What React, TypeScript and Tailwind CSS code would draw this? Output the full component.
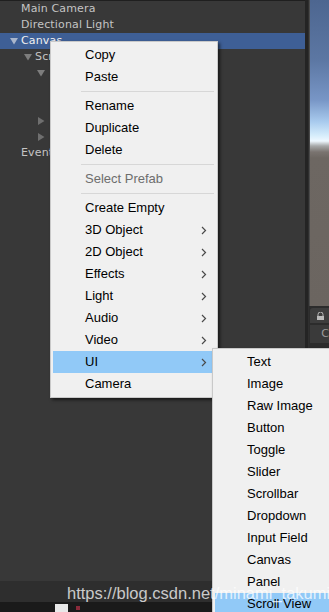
import React from "react";

type Row = {
  label: string;
  pad: string;
  tri?: "down" | "right";
  triBox?: string;
  selected?: boolean;
};

const rows: Row[] = [
  { label: "Main Camera", pad: "pl-[21px]" },
  { label: "Directional Light", pad: "pl-[21px]" },
  { label: "Canvas", pad: "pl-[10px]", tri: "down", triBox: "w-[11px]", selected: true },
  { label: "Scroll View", pad: "pl-[24px]", tri: "down", triBox: "w-[11px]" },
  { label: "", pad: "pl-[37px]", tri: "down", triBox: "w-[12px]" },
  { label: "", pad: "pl-[63px]" },
  { label: "", pad: "pl-[77px]" },
  { label: "", pad: "pl-[38px]", tri: "right", triBox: "w-[11px]" },
  { label: "", pad: "pl-[38px]", tri: "right", triBox: "w-[11px]" },
  { label: "EventSystem", pad: "pl-[21px]" },
];

function Tri({ dir, light }: { dir: "down" | "right"; light?: boolean }) {
  if (dir === "down")
    return (
      <svg width="8" height="7" viewBox="0 0 8 7">
        <polygon points="0,0 8,0 4,6.5" fill={light ? "#a9b6cc" : "#7d7d7d"} />
      </svg>
    );
  return (
    <svg width="7" height="8" viewBox="0 0 7 8">
      <polygon points="0,0 6.5,4 0,8" fill="#6f6f6f" />
    </svg>
  );
}

function Chevron() {
  return (
    <svg width="6" height="9" viewBox="0 0 6 9" className="mr-[8px]">
      <path d="M1 1 L4.5 4.5 L1 8" fill="none" stroke="#4a4a4a" strokeWidth="1.2" />
    </svg>
  );
}

function Item({
  label,
  arrow,
  active,
  disabled,
}: {
  label: string;
  arrow?: boolean;
  active?: boolean;
  disabled?: boolean;
}) {
  return (
    <div
      className={
        "h-[22px] flex items-center justify-between pl-[32px] " +
        (active ? "bg-[#91c9f7]" : "")
      }
    >
      <span className={disabled ? "text-[#6d6d6d]" : "text-black"}>{label}</span>
      {arrow ? <Chevron /> : null}
    </div>
  );
}

function Sep() {
  return (
    <div className="h-[7px] pt-[3px] pl-[28px] pr-[1px]">
      <div className="h-px bg-[#d7d7d7]" />
    </div>
  );
}

export default function App() {
  return (
    <div className="relative w-[329px] h-[612px] overflow-hidden bg-[#383838] flex flex-col">
      {/* main area */}
      <div className="flex h-[581px]">
        {/* hierarchy */}
        <div
          className="w-[309px] flex flex-col border-t border-[#1f1f1f] text-[11px] tracking-[0.15px] text-[#c4c4c4]"
          style={{ fontFamily: '"DejaVu Sans", sans-serif' }}
        >
          {rows.map((r, i) => (
            <div
              key={i}
              className={
                "h-[16px] flex items-center whitespace-nowrap " +
                r.pad +
                (r.selected ? " bg-[#3e5f96] text-[#f0f0f0]" : "")
              }
            >
              {r.tri ? (
                <span className={"flex items-center shrink-0 " + (r.triBox ?? "")}>
                  <Tri dir={r.tri} light={r.selected} />
                </span>
              ) : null}
              {r.label ? <span>{r.label}</span> : null}
            </div>
          ))}
        </div>
        {/* divider */}
        <div className="w-[4px] bg-[#242424] border-r border-[#2f2f2f]" />
        {/* scene view strip */}
        <div className="flex-1 flex flex-col">
          <div className="h-[306px] border-l border-[#4a4a4a] bg-[linear-gradient(to_bottom,#4d6690_0px,#5c77a3_60px,#7896c6_100px,#a9cbee_122px,#d4ecfb_135px,#eef8ff_141px,#a6a8a8_146px,#7a7470_152px,#6d6762_158px,#6b6560_100%)]" />
          <div className="flex-1 bg-[#2c2c2c] flex flex-col gap-[2px] pt-[2px] pl-[1px]">
            <div className="h-[15px] rounded-tl-[3px] bg-[#3d3d3d] flex items-center pl-[6px]">
              <svg width="9" height="8" viewBox="0 0 9 8">
                <path d="M2 4 V2.5 A2.5 2.5 0 0 1 7 2.5 V4" fill="none" stroke="#bbb" strokeWidth="1" />
                <rect x="1" y="4" width="7" height="4" fill="#bbb" />
              </svg>
            </div>
            <div
              className="h-[18px] bg-[#3a3a3a] flex items-center pl-[11px] text-[11px] text-[#9a9a9a]"
              style={{ fontFamily: '"DejaVu Sans", sans-serif' }}
            >
              C
            </div>
          </div>
        </div>
      </div>
      {/* bottom band */}
      <div className="h-[21px] bg-[#2e2e2e]" />
      <div className="flex-1 bg-[#1a1a1a] flex items-end pl-[55px] gap-[8px]">
        <div className="w-[13px] h-[8px] bg-[#e8e8e8]" />
        <div className="w-[4px] h-[4px] bg-[#8a2a3a] mb-[2px]" />
      </div>

      {/* context menu */}
      <div
        className="absolute left-[50px] top-[41px] w-[168px] bg-[#f0f0f0] border border-[#c9c9c9] p-[2px] shadow-[2px_2px_3px_rgba(0,0,0,0.55)] text-[13px]"
        style={{ fontFamily: '"Liberation Sans", Arial, sans-serif' }}
      >
        <Item label="Copy" />
        <Item label="Paste" />
        <Sep />
        <Item label="Rename" />
        <Item label="Duplicate" />
        <Item label="Delete" />
        <Sep />
        <Item label="Select Prefab" disabled />
        <Sep />
        <Item label="Create Empty" />
        <Item label="3D Object" arrow />
        <Item label="2D Object" arrow />
        <Item label="Effects" arrow />
        <Item label="Light" arrow />
        <Item label="Audio" arrow />
        <Item label="Video" arrow />
        <Item label="UI" arrow active />
        <Item label="Camera" />
      </div>

      {/* submenu */}
      <div
        className="absolute left-[212px] top-[348px] w-[140px] bg-[#f0f0f0] border border-[#c9c9c9] p-[2px] shadow-[2px_2px_3px_rgba(0,0,0,0.55)] text-[13px]"
        style={{ fontFamily: '"Liberation Sans", Arial, sans-serif' }}
      >
        <Item label="Text" />
        <Item label="Image" />
        <Item label="Raw Image" />
        <Item label="Button" />
        <Item label="Toggle" />
        <Item label="Slider" />
        <Item label="Scrollbar" />
        <Item label="Dropdown" />
        <Item label="Input Field" />
        <Item label="Canvas" />
        <Item label="Panel" />
        <Item label="Scroll View" active />
      </div>

      {/* watermark */}
      <div
        className="absolute left-[67px] top-[583px] text-[16.5px] leading-[20px] text-white/75 whitespace-nowrap pointer-events-none"
        style={{ fontFamily: '"Liberation Sans", Arial, sans-serif' }}
      >
        https://blog.csdn.net/minami_takumi
      </div>
    </div>
  );
}
